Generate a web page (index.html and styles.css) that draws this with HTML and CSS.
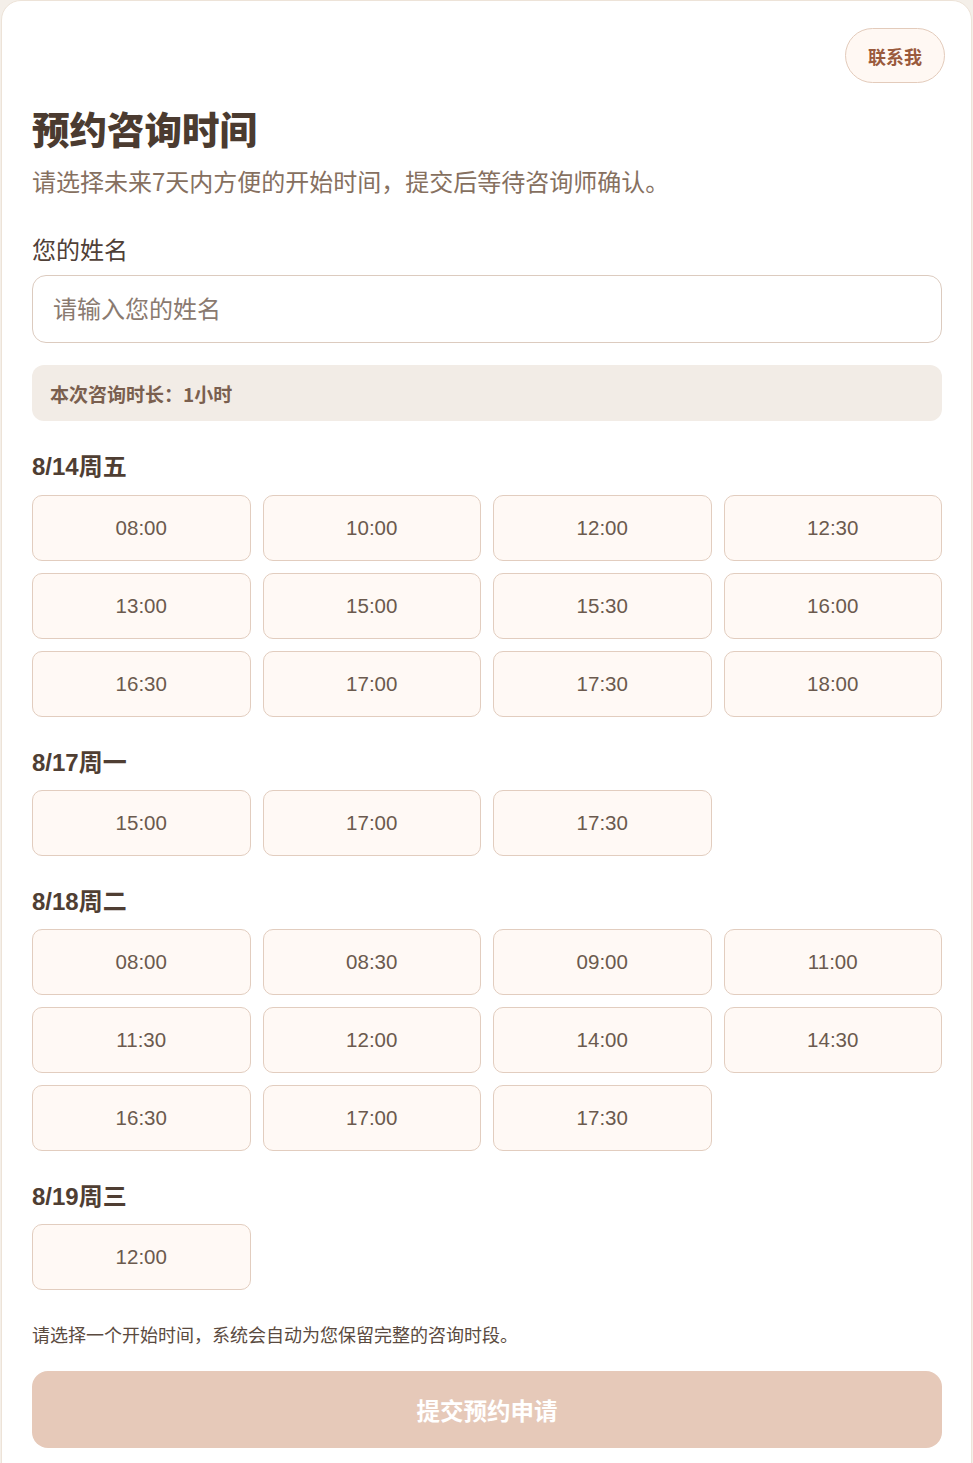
FILE: index.html
```html
<!DOCTYPE html>
<html lang="zh-CN">
<head>
<meta charset="utf-8">
<title>预约咨询时间</title>
<link rel="stylesheet" href="styles.css">
</head>
<body>
<main class="card">
  <div class="top-bar">
    <button class="contact-btn" type="button">联系我</button>
  </div>
  <h1 class="title">预约咨询时间</h1>
  <p class="subtitle">请选择未来7天内方便的开始时间，提交后等待咨询师确认。</p>

  <label class="field-label" for="name">您的姓名</label>
  <input class="name-input" id="name" type="text" placeholder="请输入您的姓名">

  <div class="duration">本次咨询时长：1小时</div>

  <section class="day">
    <h2 class="day-title">8/14周五</h2>
    <div class="slots">
      <button class="slot" type="button">08:00</button>
      <button class="slot" type="button">10:00</button>
      <button class="slot" type="button">12:00</button>
      <button class="slot" type="button">12:30</button>
      <button class="slot" type="button">13:00</button>
      <button class="slot" type="button">15:00</button>
      <button class="slot" type="button">15:30</button>
      <button class="slot" type="button">16:00</button>
      <button class="slot" type="button">16:30</button>
      <button class="slot" type="button">17:00</button>
      <button class="slot" type="button">17:30</button>
      <button class="slot" type="button">18:00</button>
    </div>
  </section>

  <section class="day">
    <h2 class="day-title">8/17周一</h2>
    <div class="slots">
      <button class="slot" type="button">15:00</button>
      <button class="slot" type="button">17:00</button>
      <button class="slot" type="button">17:30</button>
    </div>
  </section>

  <section class="day">
    <h2 class="day-title">8/18周二</h2>
    <div class="slots">
      <button class="slot" type="button">08:00</button>
      <button class="slot" type="button">08:30</button>
      <button class="slot" type="button">09:00</button>
      <button class="slot" type="button">11:00</button>
      <button class="slot" type="button">11:30</button>
      <button class="slot" type="button">12:00</button>
      <button class="slot" type="button">14:00</button>
      <button class="slot" type="button">14:30</button>
      <button class="slot" type="button">16:30</button>
      <button class="slot" type="button">17:00</button>
      <button class="slot" type="button">17:30</button>
    </div>
  </section>

  <section class="day">
    <h2 class="day-title">8/19周三</h2>
    <div class="slots">
      <button class="slot" type="button">12:00</button>
    </div>
  </section>

  <p class="note">请选择一个开始时间，系统会自动为您保留完整的咨询时段。</p>
  <button class="submit" type="button">提交预约申请</button>
</main>
</body>
</html>
```

FILE: styles.css
```css
* { box-sizing: border-box; }

html, body {
  margin: 0;
  padding: 0;
  background: #f4efe9;
}

body {
  font-family: "Liberation Sans", "Noto Sans CJK SC", sans-serif;
  color: #4a3b31;
}

.card {
  margin: 0 1px;
  background: #ffffff;
  border: 1px solid #ede3d8;
  border-radius: 20px;
  padding: 27px 29px 40px 30px;
  min-height: 1500px;
}

.top-bar {
  display: flex;
  justify-content: flex-end;
  margin-right: -3px;
}

.contact-btn {
  width: 100px;
  height: 55px;
  border-radius: 28px;
  border: 1px solid #e3cbbb;
  background: #fff8f3;
  color: #9a5a3c;
  font-family: "Noto Sans CJK SC", sans-serif;
  font-weight: 700;
  font-size: 18px;
  padding: 0;
}

.title {
  margin: 18px 0 0;
  font-family: "Noto Sans CJK SC", sans-serif;
  font-size: 37.5px;
  font-weight: 900;
  line-height: 54px;
  color: #4b3b30;
}

.subtitle {
  margin: 9px 0 0;
  font-family: "Noto Sans CJK SC", sans-serif;
  font-size: 24px;
  line-height: 34px;
  color: #86705f;
}

.field-label {
  display: block;
  margin-top: 34px;
  font-family: "Noto Sans CJK SC", sans-serif;
  font-size: 24px;
  line-height: 34px;
  color: #4f4037;
}

.name-input {
  display: block;
  width: 100%;
  height: 68px;
  margin-top: 9px;
  padding: 0 20px 3px;
  border: 1px solid #dccbbf;
  border-radius: 14px;
  background: #fff;
  font-family: "Noto Sans CJK SC", sans-serif;
  font-size: 24px;
  color: #4a3b31;
  outline: none;
}

.name-input::placeholder {
  color: #8a7a70;
}

.duration {
  margin-top: 22px;
  height: 56px;
  display: flex;
  align-items: center;
  padding: 0 18px;
  border-radius: 12px;
  background: #f2ece6;
  font-family: "Noto Sans CJK SC", sans-serif;
  font-size: 19px;
  font-weight: 700;
  color: #7a5f4f;
}

.day {
  margin-top: 32px;
}

.day-title {
  margin: 0 0 14px;
  font-size: 24px;
  line-height: 28px;
  font-weight: 700;
  color: #4f3e33;
}

.day + .day .day-title {
  margin-bottom: 13px;
}

.slots {
  display: grid;
  grid-template-columns: repeat(4, 1fr);
  gap: 12px;
}

.slot {
  height: 66px;
  border: 1px solid #e2cdbf;
  border-radius: 10px;
  background: #fff9f5;
  font-family: "Liberation Sans", sans-serif;
  font-size: 20.5px;
  color: #6b5a4e;
  padding: 0;
}

.note {
  margin: 31px 0 0;
  font-family: "Noto Sans CJK SC", sans-serif;
  font-size: 18px;
  line-height: 26px;
  color: #5a4a40;
}

.submit {
  display: block;
  width: 100%;
  height: 77px;
  margin-top: 24px;
  border: none;
  border-radius: 16px;
  background: #e6c9b9;
  color: #ffffff;
  font-family: "Noto Sans CJK SC", sans-serif;
  font-size: 23.5px;
  font-weight: 700;
}
```
